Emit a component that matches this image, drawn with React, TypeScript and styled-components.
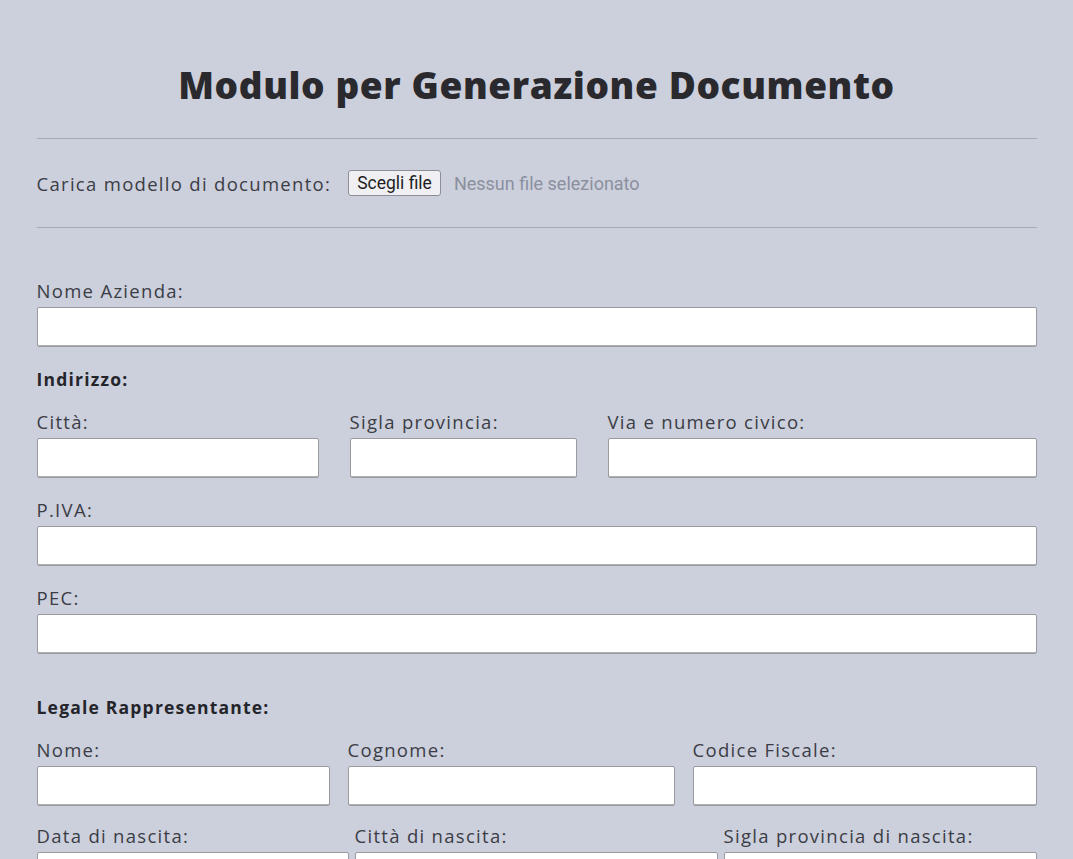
import React from "react";
import styled, { createGlobalStyle } from "styled-components";

const GlobalStyle = createGlobalStyle`
  html, body {
    margin: 0;
    padding: 0;
    background: #cccfdc;
  }
  body {
    font-family: "Open Sans", "DejaVu Sans", sans-serif;
    color: #3b3d45;
  }
  * { box-sizing: border-box; }
`;

const Page = styled.div`
  max-width: 1000px;
  margin: 0 auto;
  padding-bottom: 40px;
`;

const Title = styled.h1`
  margin: 63px 0 31px;
  text-align: center;
  font-family: "Open Sans", sans-serif;
  font-size: 37px;
  line-height: 44px;
  letter-spacing: 0.6px;
  font-weight: 800;
  color: #2a2a2e;
`;

const Rule = styled.hr`
  margin: 0;
  border: none;
  border-top: 1px solid #a7a9b4;
  height: 1px;
`;

const UploadRow = styled.div`
  height: 88px;
  display: flex;
  align-items: center;
`;

const UploadLabel = styled.span`
  font-size: 18.5px;
  letter-spacing: 1.3px;
  color: #3b3d45;
  margin-right: 17px;
`;

const FileButton = styled.label`
  display: inline-flex;
  align-items: center;
  height: 26px;
  padding: 0 8px;
  border: 1px solid #8e8f96;
  border-radius: 3px;
  background: #f0f0f4;
  font-family: "Roboto", sans-serif;
  font-size: 17.5px;
  color: #1e1e22;
`;

const FileStatus = styled.span`
  margin-left: 13px;
  font-family: "Roboto", sans-serif;
  font-size: 18px;
  color: #8b8f9e;
`;

const Form = styled.form`
  display: flex;
  flex-direction: column;
  padding-top: 51px;
`;

const Field = styled.div<{ $mb?: number }>`
  display: flex;
  flex-direction: column;
  margin-bottom: ${(p) => (p.$mb ?? 20)}px;
`;

const Label = styled.label`
  display: block;
  font-size: 18.5px;
  line-height: 24px;
  letter-spacing: 1.3px;
  margin-bottom: 4px;
  color: #3b3d45;
  white-space: nowrap;
`;

const Input = styled.input`
  width: 100%;
  height: 40px;
  border: 1px solid #9a9ba1;
  border-radius: 2px;
  background: #ffffff;
  box-shadow: inset 0 -1px 0 #b0b0b4;
  font-size: 16px;
  padding: 0 8px;
`;

const SectionTitle = styled.div<{ $mt?: number }>`
  font-size: 17.5px;
  line-height: 24px;
  letter-spacing: 1.2px;
  font-weight: 700;
  color: #24252a;
  margin-top: ${(p) => p.$mt ?? 0}px;
  margin-bottom: 19px;
`;

const Row = styled.div<{ $cols: string; $gap: number; $mb?: number }>`
  display: grid;
  grid-template-columns: ${(p) => p.$cols};
  column-gap: ${(p) => p.$gap}px;
  margin-bottom: ${(p) => p.$mb ?? 0}px;

  & > ${Field} {
    margin-bottom: 0;
  }
`;

const LabeledInput = ({ label, mb }: { label: string; mb?: number }) => (
  <Field $mb={mb}>
    <Label>{label}</Label>
    <Input type="text" />
  </Field>
);

export default function App() {
  return (
    <>
      <GlobalStyle />
      <Page>
        <Title>Modulo per Generazione Documento</Title>
        <Rule />
        <UploadRow>
          <UploadLabel>Carica modello di documento:</UploadLabel>
          <FileButton>Scegli file</FileButton>
          <FileStatus>Nessun file selezionato</FileStatus>
        </UploadRow>
        <Rule />
        <Form>
          <LabeledInput label="Nome Azienda:" />
          <SectionTitle>Indirizzo:</SectionTitle>
          <Row $cols="282px 227px 1fr" $gap={31} $mb={20}>
            <LabeledInput label="Città:" />
            <LabeledInput label="Sigla provincia:" />
            <LabeledInput label="Via e numero civico:" />
          </Row>
          <LabeledInput label="P.IVA:" />
          <LabeledInput label="PEC:" />
          <SectionTitle $mt={21}>Legale Rappresentante:</SectionTitle>
          <Row $cols="293px 327px 1fr" $gap={18} $mb={18}>
            <LabeledInput label="Nome:" />
            <LabeledInput label="Cognome:" />
            <LabeledInput label="Codice Fiscale:" />
          </Row>
          <Row $cols="312px 363px 1fr" $gap={6} $mb={20}>
            <LabeledInput label="Data di nascita:" />
            <LabeledInput label="Città di nascita:" />
            <LabeledInput label="Sigla provincia di nascita:" />
          </Row>
        </Form>
      </Page>
    </>
  );
}
